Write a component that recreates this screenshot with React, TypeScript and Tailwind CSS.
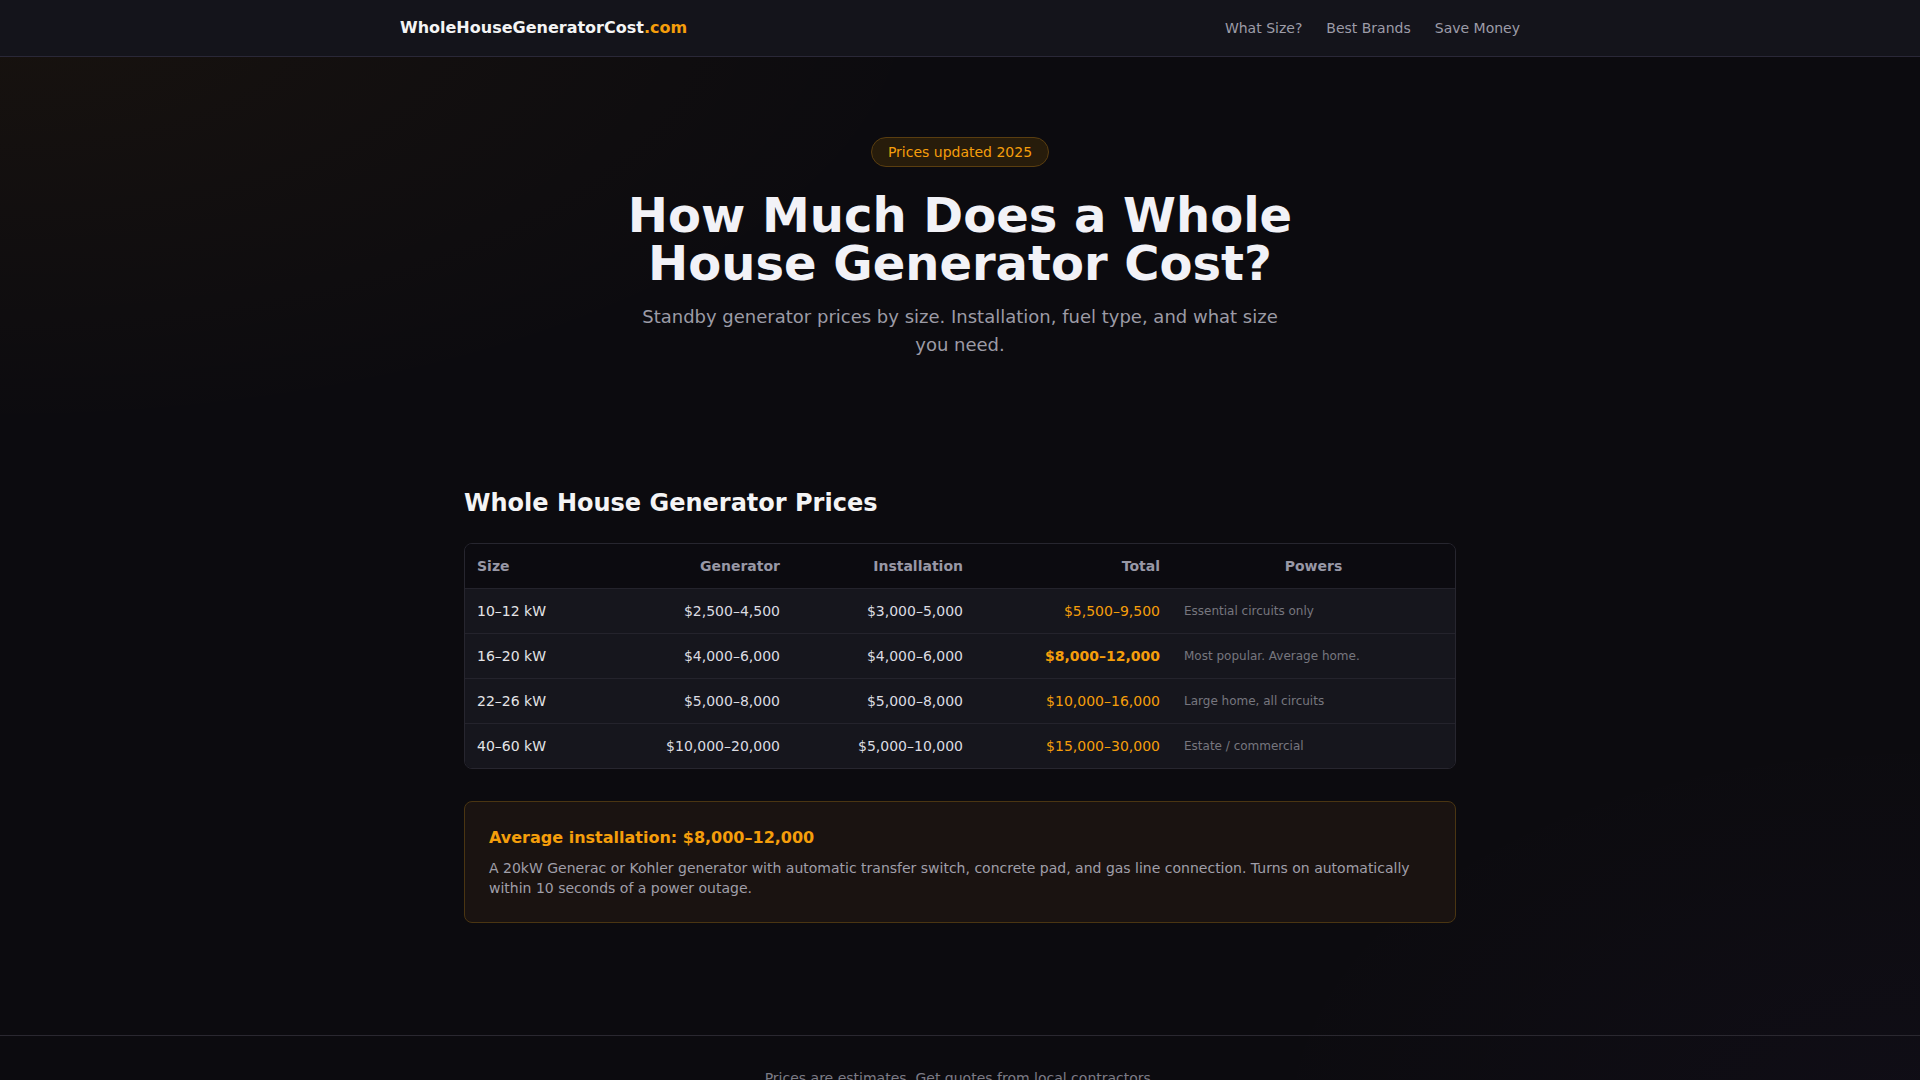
import React from "react";

const rows = [
  { size: "10–12 kW", gen: "$2,500–4,500", inst: "$3,000–5,000", total: "$5,500–9,500", powers: "Essential circuits only", bold: false },
  { size: "16–20 kW", gen: "$4,000–6,000", inst: "$4,000–6,000", total: "$8,000–12,000", powers: "Most popular. Average home.", bold: true },
  { size: "22–26 kW", gen: "$5,000–8,000", inst: "$5,000–8,000", total: "$10,000–16,000", powers: "Large home, all circuits", bold: false },
  { size: "40–60 kW", gen: "$10,000–20,000", inst: "$5,000–10,000", total: "$15,000–30,000", powers: "Estate / commercial", bold: false },
];

export default function App() {
  return (
    <div className="min-h-screen bg-[#0c0b0f] bg-[radial-gradient(ellipse_70%_55%_at_0%_0%,rgba(245,158,11,0.05),transparent_70%),radial-gradient(ellipse_50%_50%_at_100%_100%,rgba(139,92,246,0.03),transparent_70%)] font-['DejaVu_Sans',sans-serif] text-[#e4e4e7]">
      <header className="border-b border-[#2a2838] bg-[#14141b]">
        <div className="mx-auto flex max-w-6xl items-center justify-between px-4 py-4">
          <div className="text-base leading-6 font-bold text-[#f4f4f5]">
            WholeHouseGeneratorCost<span className="text-[#f59e0b]">.com</span>
          </div>
          <nav className="flex items-center gap-6 text-sm text-[#9d9ca8]">
            <span>What Size?</span>
            <span>Best Brands</span>
            <span>Save Money</span>
          </nav>
        </div>
      </header>

      <section className="px-4 pt-20 pb-16 text-center">
        <div className="mb-6 inline-block rounded-full border border-[#5a3e10] bg-[#271c0b] px-4 py-1 text-sm leading-5 text-[#f59e0b]">
          Prices updated 2025
        </div>
        <h1 className="mx-auto mb-4 text-5xl font-bold text-[#f2f2f7]">
          How Much Does a Whole
          <br />
          House Generator Cost?
        </h1>
        <p className="mx-auto max-w-[656px] text-lg text-[#9c9ba6]">
          Standby generator prices by size. Installation, fuel type, and what size you need.
        </p>
      </section>

      <main className="mx-auto max-w-5xl px-4 pt-16 pb-16">
        <h2 className="mb-6 text-2xl font-bold text-[#f4f4f5]">Whole House Generator Prices</h2>
        <div className="overflow-hidden rounded-lg border border-[#27262f]">
          <table className="w-full table-fixed border-collapse text-sm">
            <thead>
              <tr className="bg-[#0c0b10] text-[#9898a6]">
                <th className="w-[150px] px-3 py-3 text-left font-bold">Size</th>
                <th className="w-[177px] px-3 py-3 text-right font-bold">Generator</th>
                <th className="w-[183px] px-3 py-3 text-right font-bold">Installation</th>
                <th className="w-[197px] px-3 py-3 text-right font-bold">Total</th>
                <th className="px-3 py-3 text-center font-bold">Powers</th>
              </tr>
            </thead>
            <tbody>
              {rows.map((r) => (
                <tr key={r.size} className="border-t border-[#24232c] bg-[#16161d]">
                  <td className="px-3 py-3 text-left text-[#e4e4e7]">{r.size}</td>
                  <td className="px-3 py-3 text-right text-[#dcdce2]">{r.gen}</td>
                  <td className="px-3 py-3 text-right text-[#dcdce2]">{r.inst}</td>
                  <td className={r.bold ? "px-3 py-3 text-right font-bold text-[#f59e0b]" : "px-3 py-3 text-right text-[#f59e0b]"}>
                    {r.total}
                  </td>
                  <td className="px-3 py-3 text-left text-xs text-[#77767f]">{r.powers}</td>
                </tr>
              ))}
            </tbody>
          </table>
        </div>

        <div className="mt-8 rounded-lg border border-[#4a3512] bg-[#1a1311] p-6">
          <h3 className="mb-2 text-base leading-6 font-bold text-[#f59e0b]">Average installation: $8,000–12,000</h3>
          <p className="text-sm text-[#a09fa9]">
            A 20kW Generac or Kohler generator with automatic transfer switch, concrete pad, and gas line connection. Turns on automatically within 10 seconds of a power outage.
          </p>
        </div>
      </main>

      <footer className="mt-12 border-t border-[#2a2830] py-8 text-center text-sm text-[#7c7b86]">
        Prices are estimates. Get quotes from local contractors.
      </footer>
    </div>
  );
}
